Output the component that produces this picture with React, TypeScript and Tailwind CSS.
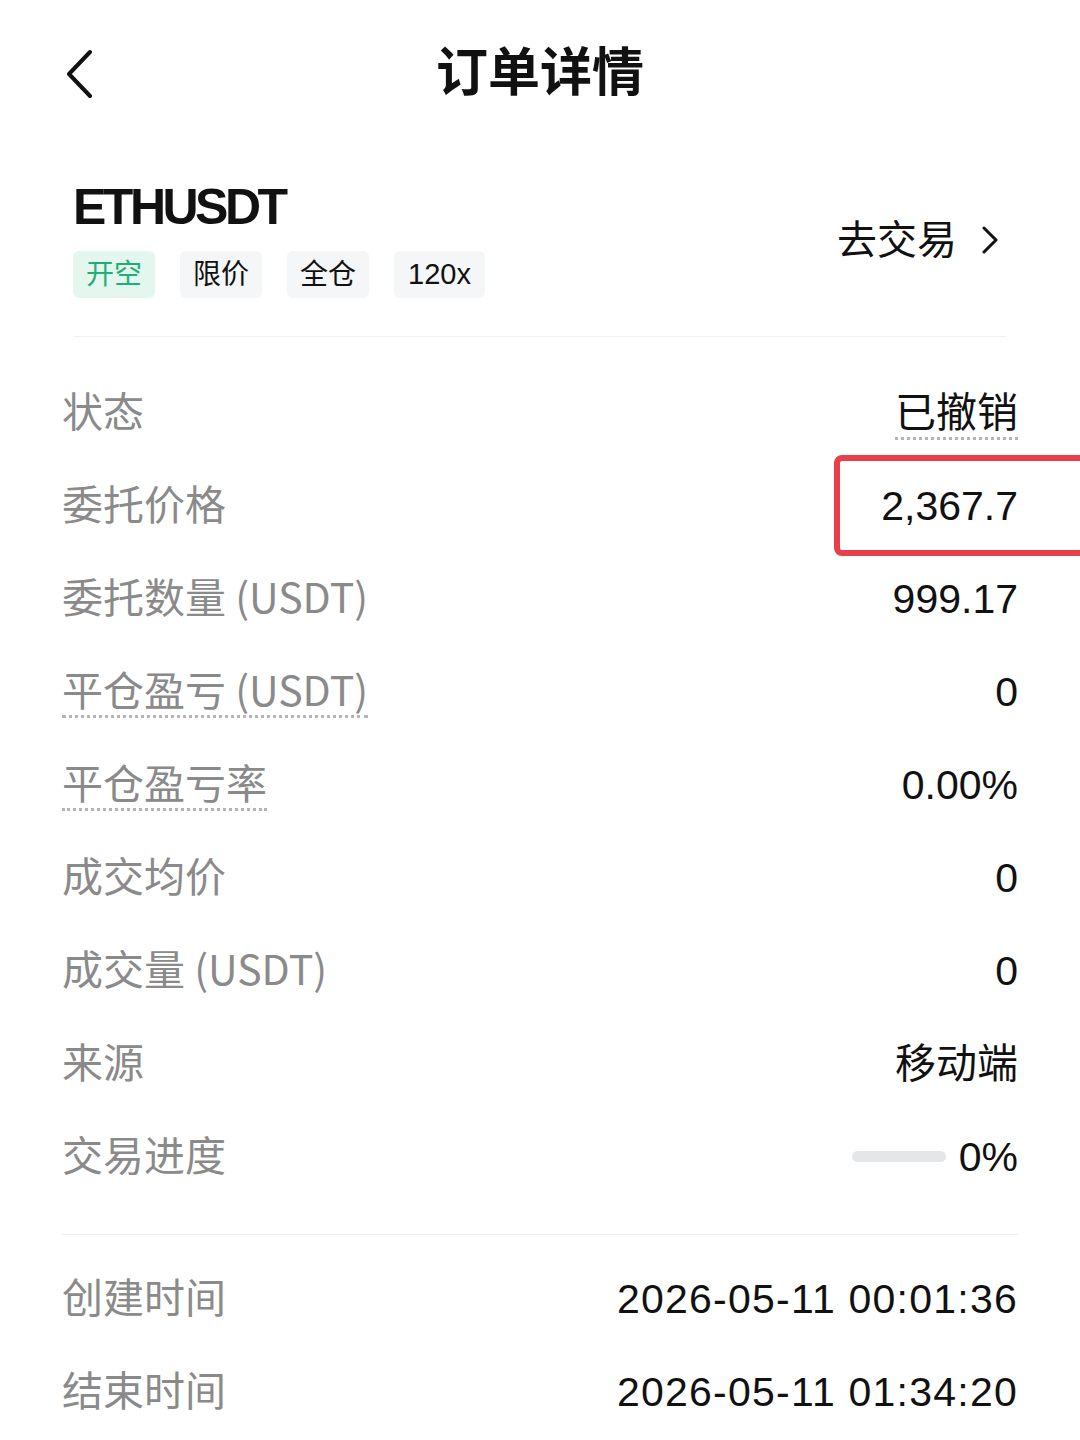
import { ReactNode } from "react";

const font = { fontFamily: '"Liberation Sans", "Noto Sans CJK SC", sans-serif' };
const cjk = { fontFamily: '"Noto Sans CJK SC", sans-serif' };

type Row = { label: string; value: ReactNode; dotLabel?: boolean };

const rows: Row[] = [
  {
    label: "状态",
    value: (
      <span className="border-b-[3px] border-dotted border-[#b5b5b5] pb-[1px]">已撤销</span>
    ),
  },
  { label: "委托价格", value: "2,367.7" },
  { label: "委托数量 (USDT)", value: "999.17" },
  { label: "平仓盈亏 (USDT)", value: "0", dotLabel: true },
  { label: "平仓盈亏率", value: "0.00%", dotLabel: true },
  { label: "成交均价", value: "0" },
  { label: "成交量 (USDT)", value: "0" },
  { label: "来源", value: "移动端" },
  {
    label: "交易进度",
    value: (
      <span className="flex items-center">
        <span className="mr-[13px] h-[11px] w-[94px] rounded-full bg-[#e4e6e7]"></span>
        0%
      </span>
    ),
  },
];

function DetailRow({ label, value, dotLabel }: Row) {
  return (
    <div className="flex h-[93px] items-center justify-between">
      <span
        style={cjk}
        className={
          dotLabel
            ? "border-b-[3px] border-dotted border-[#b5b5b5] pb-[4px] text-[41px] leading-[46px] text-[#8a8a8a]"
            : "border-b-[3px] border-transparent pb-[4px] text-[41px] leading-[46px] text-[#8a8a8a]"
        }
      >
        {label}
      </span>
      <span className="text-[41px] leading-[44px] text-[#111]">{value}</span>
    </div>
  );
}

export default function App() {
  return (
    <div className="relative h-[1440px] w-[1080px] overflow-hidden bg-white" style={font}>
      {/* header */}
      <div className="grid h-[146px] grid-cols-[1fr_auto_1fr] items-center px-[62px]">
        <svg width="34" height="50" viewBox="0 0 34 50" className="ml-[1px]">
          <path d="M27 4 L6 26 L27 48" fill="none" stroke="#111" strokeWidth="4" strokeLinecap="round" strokeLinejoin="round" />
        </svg>
        <h1 className="text-[52px] font-bold leading-none text-[#111]">订单详情</h1>
        <div></div>
      </div>

      {/* symbol */}
      <div className="mx-[73px] flex items-center justify-between border-b border-[#f0f0f0] pb-[38px] pt-[36px]">
        <div>
          <div className="text-[50px] font-bold leading-none tracking-[-0.07em] text-[#111]">ETHUSDT</div>
          <div className="mt-[19px] flex gap-[25px]">
            <span className="flex h-[47px] items-center rounded-[6px] bg-[#e4f7ef] px-[13px] text-[28px] text-[#1fae77]">开空</span>
            <span className="flex h-[47px] items-center rounded-[6px] bg-[#f5f6f7] px-[13px] text-[28px] text-[#111]">限价</span>
            <span className="flex h-[47px] items-center rounded-[6px] bg-[#f5f6f7] px-[13px] text-[28px] text-[#111]">全仓</span>
            <span className="flex h-[47px] items-center rounded-[6px] bg-[#f5f6f7] px-[14px] text-[29px] text-[#111]">120x</span>
          </div>
        </div>
        <div className="flex items-center pr-[8px] text-[40px] text-[#111]">
          去交易
          <svg width="18" height="28" viewBox="0 0 18 28" className="ml-[24px]">
            <path d="M3 2 L15 14 L3 26" fill="none" stroke="#111" strokeWidth="3" strokeLinecap="round" strokeLinejoin="round" />
          </svg>
        </div>
      </div>

      {/* details */}
      <div className="px-[62px] pt-[29px]">
        {rows.map((r) => (
          <DetailRow key={r.label} {...r} />
        ))}
      </div>

      <div className="mx-[62px] mt-[31px] border-t border-[#f0f0f0] pt-[17px]">
        <DetailRow label="创建时间" value={<span className="tracking-[0.03em]">2026-05-11 00:01:36</span>} />
        <DetailRow label="结束时间" value={<span className="tracking-[0.03em]">2026-05-11 01:34:20</span>} />
      </div>

      {/* annotation box */}
      <div className="absolute left-[834px] top-[455px] h-[101px] w-[262px] rounded-[8px] border-[6px] border-[#e8404a]"></div>
    </div>
  );
}
